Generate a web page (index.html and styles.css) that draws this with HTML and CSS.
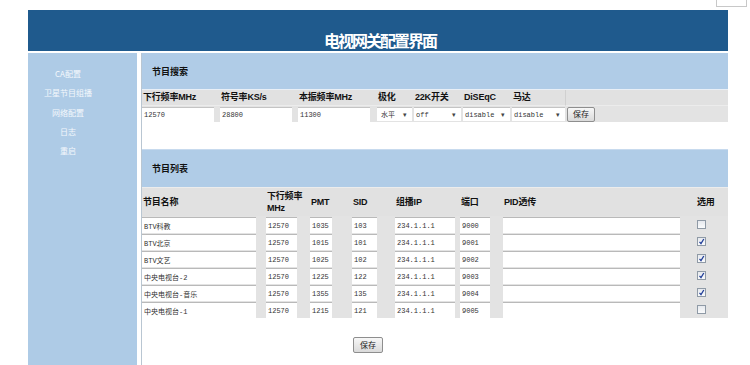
FILE: index.html
```html
<!DOCTYPE html>
<html lang="zh-CN">
<head>
    <meta charset="UTF-8">
    <title>电视网关配置界面</title>
    <link rel="stylesheet" href="styles.css">
</head>
<body>
    <div class="topbar"><div class="corner"></div></div>

    <div class="page">
        <div class="header">
            <h1 class="title">电视网关配置界面</h1>
        </div>

        <div class="main">
            <ul class="menu">
                <li>CA配置</li>
                <li>卫星节目组播</li>
                <li>网络配置</li>
                <li>日志</li>
                <li>重启</li>
            </ul>

            <div class="content">
                <!-- 节目搜索 -->
                <div class="band">节目搜索</div>
                <div class="search">
                    <div class="th">下行频率MHz</div>
                    <div class="th">符号率KS/s</div>
                    <div class="th">本振频率MHz</div>
                    <div class="th">极化</div>
                    <div class="th">22K开关</div>
                    <div class="th">DiSEqC</div>
                    <div class="th">马达</div>
                    <div class="th th-last"></div>

                    <div class="td"><input class="field" value="12570"></div>
                    <div class="td"><input class="field" value="28800"></div>
                    <div class="td"><input class="field" value="11300"></div>
                    <div class="td"><div class="sel sel-wide"><select><option>水平</option></select><span class="arrow">▾</span></div></div>
                    <div class="td"><div class="sel"><select><option>off</option></select><span class="arrow">▾</span></div></div>
                    <div class="td"><div class="sel"><select><option>disable</option></select><span class="arrow">▾</span></div></div>
                    <div class="td"><div class="sel"><select><option>disable</option></select><span class="arrow">▾</span></div></div>
                    <div class="td"><button class="btn">保存</button></div>
                </div>

                <!-- 节目列表 -->
                <div class="band band-list">节目列表</div>
                <div class="list" id="list">
                    <div class="th">节目名称</div>
                    <div class="th">下行频率<br>MHz</div>
                    <div class="th">PMT</div>
                    <div class="th">SID</div>
                    <div class="th">组播IP</div>
                    <div class="th">端口</div>
                    <div class="th">PID透传</div>
                    <div class="th">选用</div>
                </div>

                <div class="actions"><button class="btn">保存</button></div>
            </div>
        </div>
    </div>

    <script>
        // 节目数据
        var programs = [
            ['BTV科教', '12570', '1035', '103', '234.1.1.1', '9000', false],
            ['BTV北京', '12570', '1015', '101', '234.1.1.1', '9001', true],
            ['BTV文艺', '12570', '1025', '102', '234.1.1.1', '9002', true],
            ['中央电视台-2', '12570', '1225', '122', '234.1.1.1', '9003', true],
            ['中央电视台-音乐', '12570', '1355', '135', '234.1.1.1', '9004', true],
            ['中央电视台-1', '12570', '1215', '121', '234.1.1.1', '9005', false]
        ];
        var widths = ['w-name', 'w-freq', 'w-pmt', 'w-sid', 'w-ip', 'w-port'];

        function renderList() {
            var list = document.getElementById('list');
            programs.forEach(function (p) {
                for (var i = 0; i < 6; i++) {
                    var td = document.createElement('div');
                    td.className = 'td';
                    var input = document.createElement('input');
                    input.className = 'field ' + widths[i];
                    input.value = p[i];
                    td.appendChild(input);
                    list.appendChild(td);
                }
                var pid = document.createElement('div');
                pid.className = 'td';
                pid.innerHTML = '<input class="field w-pid" value="">';
                list.appendChild(pid);

                var chk = document.createElement('div');
                chk.className = 'td td-chk';
                chk.innerHTML = '<span class="chk">' + (p[6]
                    ? '<svg width="7" height="7" viewBox="0 0 7 7"><path d="M1.5 3.8 L3 5.6 L5.8 1" fill="none" stroke="#24409a" stroke-width="1.3"/></svg>'
                    : '') + '</span>';
                list.appendChild(chk);
            });
        }

        renderList();
    </script>
</body>
</html>
```

FILE: styles.css
```css
body {
    margin: 0;
    padding: 0;
    font-family: "Liberation Sans", "Noto Sans CJK SC", sans-serif;
    background: #fff;
    color: #111;
    overflow: hidden;
}

.topbar {
    height: 10px;
    display: flex;
    justify-content: flex-end;
}

.corner {
    width: 29px;
    height: 6px;
    margin-right: 3px;
    border: 1px solid #c8c8c8;
    border-top: none;
}

.page {
    width: 700px;
    margin-left: 28px;
}

/* 顶部标题 */
.header {
    height: 41px;
    background: #1f5a8d;
    display: flex;
    align-items: flex-end;
    justify-content: center;
}

.title {
    margin: 0 0 1px 4px;
    font-family: "Noto Sans CJK SC", sans-serif;
    font-size: 16px;
    font-weight: bold;
    letter-spacing: -2px;
    line-height: 20px;
    color: #fff;
}

.main {
    display: flex;
    margin-top: 2px;
    min-height: calc(100vh - 53px);
}

/* 左侧菜单 */
.menu {
    list-style: none;
    margin: 0;
    padding: 11px 29px 0 0;
    width: 80px;
    background: #aecbe6;
    text-align: center;
}

.menu li {
    font-family: "Noto Sans CJK SC", sans-serif;
    font-size: 8px;
    line-height: 19.3px;
    color: #f4f8fc;
}

.content {
    flex: 1;
    margin-left: 4px;
    border-left: 1px solid #b9c6d2;
}

.band {
    height: 36px;
    line-height: 37px;
    padding-left: 10px;
    background: #b0cce7;
    font-family: "Noto Sans CJK SC", sans-serif;
    font-size: 9px;
    font-weight: bold;
    border-bottom: 1px solid #e9eff6;
}

.band-list {
    margin-top: 27px;
    height: 37px;
    line-height: 38px;
    border-top: 1px solid #c7daee;
    border-bottom: none;
}

.th {
    font-family: "Liberation Sans", "Noto Sans CJK SC", sans-serif;
    font-size: 9px;
    font-weight: bold;
    letter-spacing: -0.2px;
    color: #111;
    background: #e1e1e1;
    padding-left: 1px;
}

.td {
    background: #e3e3e3;
    display: flex;
    align-items: center;
}

.field {
    box-sizing: border-box;
    height: 15px;
    margin: 0;
    padding: 0 2px;
    border: none;
    border-top: 1px solid #c4c4c4;
    background: #fff;
    font-family: "Liberation Mono", "Noto Sans CJK SC", monospace;
    font-size: 7px;
    color: #333;
    outline: none;
}

/* 搜索表 */
.search {
    display: grid;
    grid-template-columns: 78px 78px 79px 37px 49px 49px 53px 1fr;
    background: #e3e3e3;
}

.search .th {
    height: 15px;
    line-height: 15px;
    border-bottom: 1px solid #ececec;
}

.search .th-last {
    border-left: 1px solid #d0d0d0;
}

.search .td {
    height: 16px;
}

.search .field {
    width: 72px;
}

.sel {
    display: flex;
    align-items: center;
    width: 47px;
    height: 14px;
    background: #fff;
    border-top: 1px solid #c4c4c4;
    box-sizing: border-box;
}

.sel-wide {
    width: 35px;
}

.sel select {
    flex: 1;
    min-width: 0;
    appearance: none;
    -webkit-appearance: none;
    border: none;
    background: transparent;
    padding: 0 0 0 2px;
    font-family: "Liberation Mono", "Noto Sans CJK SC", monospace;
    font-size: 7px;
    color: #333;
}

.sel-wide select {
    padding-left: 4px;
}

.arrow {
    width: 9px;
    font-size: 7px;
    color: #444;
}

.search .td:nth-last-child(2) .sel {
    width: 53px;
}

.btn {
    height: 15px;
    margin: 0 0 0 2px;
    padding: 0 5px;
    border: 1px solid #8e8e8e;
    border-radius: 2px;
    background: linear-gradient(#f7f7f7, #dadada);
    font-family: "Noto Sans CJK SC", sans-serif;
    font-size: 8px;
    line-height: 12px;
    color: #222;
}

/* 节目列表 */
.list {
    display: grid;
    grid-template-columns: 124px 44px 42px 43px 65px 43px 193px 1fr;
    background: #e3e3e3;
}

.list .th {
    box-sizing: border-box;
    height: 29px;
    display: flex;
    align-items: center;
    line-height: 12px;
    border-top: 1px solid #ececec;
}

.list .td {
    height: 17px;
    align-items: flex-end;
}

.list .field {
    height: 16px;
    border-top: 1px solid #b9b9b9;
}

.w-name { width: 114px; }
.w-freq { width: 31px; }
.w-pmt { width: 22px; }
.w-sid { width: 25px; }
.w-ip { width: 60px; }
.w-port { width: 30px; }
.w-pid { width: 177px; }

.list .td-chk {
    align-items: center;
    padding-left: 1px;
}

.chk {
    box-sizing: border-box;
    width: 9px;
    height: 9px;
    border: 1px solid #8f9aa6;
    background: linear-gradient(#e6e9ee, #fafbfc);
    display: flex;
    align-items: center;
    justify-content: center;
}

.actions {
    padding: 16px 0 0 211px;
}

.actions .btn {
    margin: 0;
    height: 16px;
    padding: 0 6px;
}
```
